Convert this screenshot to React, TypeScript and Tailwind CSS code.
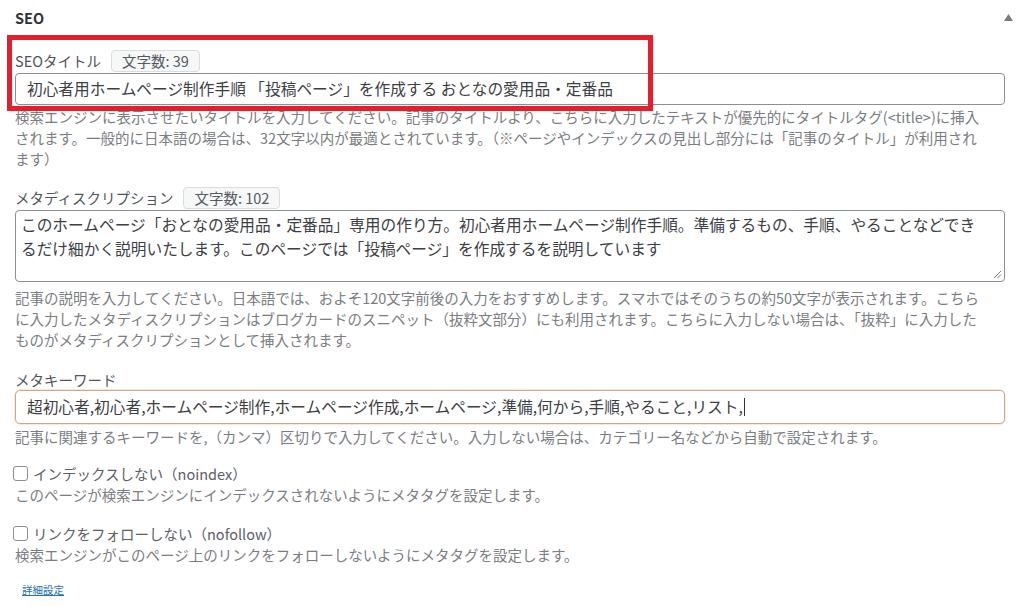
import React from "react";

const font = { fontFamily: '"Noto Sans CJK JP", "Noto Sans", sans-serif' };

function Badge({ children }: { children: React.ReactNode }) {
  return (
    <span className="inline-flex h-[22px] items-center rounded-[4px] border border-[#dcdcde] bg-[#f6f7f7] px-[10px] text-[14.5px] leading-none text-[#555a60]">
      {children}
    </span>
  );
}

function Help({ lines, className = "" }: { lines: string[]; className?: string }) {
  return (
    <div className={"text-[14.5px] leading-[21px] text-[#7a7d82] " + className}>
      {lines.map((l, i) => (
        <div key={i} className="whitespace-nowrap">
          {l}
        </div>
      ))}
    </div>
  );
}

function Checkbox({ label }: { label: string }) {
  return (
    <label className="flex h-[21px] items-center gap-[5px] text-[14.5px] text-[#5c6066]">
      <span className="ml-[-2px] h-[15px] w-[15px] rounded-[3px] border border-[#8c8f94] bg-white" />
      <span>{label}</span>
    </label>
  );
}

export default function App() {
  return (
    <div className="relative h-[615px] w-[1024px] overflow-hidden bg-white" style={font}>
      {/* header */}
      <div className="flex h-[36px] items-center justify-between pl-[15px] pr-[11px]">
        <span className="text-[14.5px] font-bold text-[#2c3338]">SEO</span>
        <svg width="9" height="7" viewBox="0 0 9 7" className="mt-[-1px]">
          <polygon points="4.5,0 9,7 0,7" fill="#787c82" />
        </svg>
      </div>

      <div className="pl-[15px] pr-[19px] pt-[14px]">
        {/* SEO title */}
        <div className="flex items-center gap-[10px]">
          <span className="text-[14.5px] text-[#50555b]">SEOタイトル</span>
          <Badge>文字数: 39</Badge>
        </div>
        <div className="mt-[1px] flex h-[32px] items-center rounded-[4px] border border-[#8c8f94] pl-[11px] text-[15.7px] text-[#3c4044]">
          初心者用ホームページ制作手順 「投稿ページ」を作成する おとなの愛用品・定番品
        </div>
        <Help
          className="mt-[1px]"
          lines={[
            "検索エンジンに表示させたいタイトルを入力してください。記事のタイトルより、こちらに入力したテキストが優先的にタイトルタグ(<title>)に挿入",
            "されます。一般的に日本語の場合は、32文字以内が最適とされています。（※ページやインデックスの見出し部分には「記事のタイトル」が利用され",
            "ます）",
          ]}
        />

        {/* Meta description */}
        <div className="mt-[18px] flex items-center gap-[10px]">
          <span className="text-[14.5px] text-[#50555b]">メタディスクリプション</span>
          <Badge>文字数: 102</Badge>
        </div>
        <div className="relative mt-[1px] h-[72px] rounded-[4px] border border-[#8c8f94] px-[5px] pt-[2px] text-[15.7px] leading-[24px] text-[#3c4044]">
          <div className="whitespace-nowrap">
            このホームページ「おとなの愛用品・定番品」専用の作り方。初心者用ホームページ制作手順。準備するもの、手順、やることなどでき
          </div>
          <div className="whitespace-nowrap">
            るだけ細かく説明いたします。このページでは「投稿ページ」を作成するを説明しています
          </div>
          <svg
            width="9"
            height="9"
            viewBox="0 0 9 9"
            className="absolute bottom-[2px] right-[2px]"
          >
            <line x1="1" y1="8" x2="8" y2="1" stroke="#777" strokeWidth="1" />
            <line x1="4.5" y1="8" x2="8" y2="4.5" stroke="#777" strokeWidth="1" />
          </svg>
        </div>
        <Help
          className="mt-[5px]"
          lines={[
            "記事の説明を入力してください。日本語では、およそ120文字前後の入力をおすすめします。スマホではそのうちの約50文字が表示されます。こちら",
            "に入力したメタディスクリプションはブログカードのスニペット（抜粋文部分）にも利用されます。こちらに入力しない場合は、「抜粋」に入力した",
            "ものがメタディスクリプションとして挿入されます。",
          ]}
        />

        {/* Meta keywords */}
        <div className="mt-[19px] h-[21px] text-[14.5px] leading-[21px] text-[#50555b]">メタキーワード</div>
        <div className="flex h-[34px] items-center rounded-[5px] border-[1.5px] border-[#d4a585] pl-[11px] text-[15.7px] text-[#3c4044] shadow-[0_0_0_0.5px_#ecd2c0]">
          <span>超初心者,初心者,ホームページ制作,ホームページ作成,ホームページ,準備,何から,手順,やること,リスト,</span>
          <span className="ml-[1px] h-[18px] w-[1px] bg-[#2c3338]" />
        </div>
        <Help
          className="mt-[2px]"
          lines={[
            "記事に関連するキーワードを,（カンマ）区切りで入力してください。入力しない場合は、カテゴリー名などから自動で設定されます。",
          ]}
        />

        {/* noindex */}
        <div className="mt-[16px]">
          <Checkbox label="インデックスしない（noindex）" />
        </div>
        <Help lines={["このページが検索エンジンにインデックスされないようにメタタグを設定します。"]} />

        {/* nofollow */}
        <div className="mt-[18px]">
          <Checkbox label="リンクをフォローしない（nofollow）" />
        </div>
        <Help lines={["検索エンジンがこのページ上のリンクをフォローしないようにメタタグを設定します。"]} />

        <div className="mt-[10px] pl-[7px]">
          <a className="text-[10.5px] leading-[14px] text-[#2271b1] underline" href="#">
            詳細設定
          </a>
        </div>
      </div>

      {/* red highlight overlay */}
      <div className="pointer-events-none absolute left-[7px] top-[35px] h-[76px] w-[646px] border-[5px] border-[#e61e2b]" />
    </div>
  );
}
